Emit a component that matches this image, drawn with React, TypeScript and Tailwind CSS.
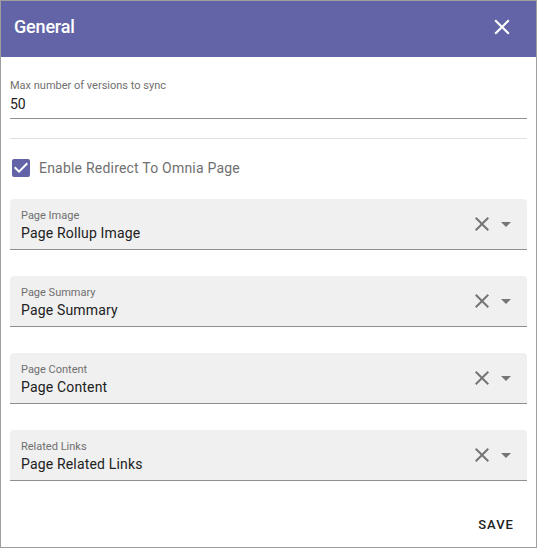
import { useState } from 'react';

const selects = [
  { label: 'Page Image', value: 'Page Rollup Image' },
  { label: 'Page Summary', value: 'Page Summary' },
  { label: 'Page Content', value: 'Page Content' },
  { label: 'Related Links', value: 'Page Related Links' },
];

const closePath =
  'M19,6.41L17.59,5L12,10.59L6.41,5L5,6.41L10.59,12L5,17.59L6.41,19L12,13.41L17.59,19L19,17.59L13.41,12L19,6.41Z';

function SelectField({ label, value }: { label: string; value: string }) {
  return (
    <div className="flex items-center h-[51px] bg-[#f0f0f0] rounded-t-[4px] border-b border-[#8f8f8f] pl-[11px] pr-[9px]">
      <div className="flex-1 self-start pt-[10px] flex flex-col">
        <span className="text-[11px] leading-[14px] text-[#6f6f6f]">{label}</span>
        <span className="text-[14px] leading-[20px] tracking-[0.012em] text-[#212121]">{value}</span>
      </div>
      <svg viewBox="0 0 24 24" className="w-6 h-6 fill-[#757575]">
        <path d={closePath} />
      </svg>
      <svg viewBox="0 0 24 24" className="w-6 h-6 fill-[#757575]">
        <path d="M7,10L12,15L17,10H7Z" />
      </svg>
    </div>
  );
}

export default function App() {
  const [checked, setChecked] = useState(true);

  return (
    <div
      className="w-[537px] h-[548px] border border-[#9e9e9e] bg-white flex flex-col"
      style={{ fontFamily: 'Roboto, "Noto Sans", sans-serif' }}
    >
      {/* Header */}
      <div className="h-[56px] bg-[#6264a7] flex items-center justify-between pl-[13px] pr-[21px] pb-[5px]">
        <span className="text-white text-[18px] font-medium tracking-[-0.01em]">General</span>
        <svg viewBox="0 0 24 24" className="w-[26px] h-[26px] fill-white">
          <path d={closePath} />
        </svg>
      </div>

      <div className="flex-1 flex flex-col px-[9px] pt-[22px]">
        {/* Text field */}
        <div className="flex flex-col border-b border-[#8f8f8f] pb-[4px]">
          <span className="text-[11px] leading-[14px] text-[#6f6f6f]">Max number of versions to sync</span>
          <span className="mt-[1px] text-[14px] leading-[20px] text-[#212121]">50</span>
        </div>

        <div className="mt-[19px] h-px bg-[#e0e0e0]" />

        {/* Checkbox */}
        <label className="mt-[18px] flex items-center h-[22px] cursor-pointer" onClick={() => setChecked(!checked)}>
          <svg viewBox="0 0 24 24" className="w-6 h-6 -ml-[1px] fill-[#6264a7]">
            {checked ? (
              <path d="M10,17L5,12L6.41,10.58L10,14.17L17.59,6.58L19,8M19,3H5C3.89,3 3,3.89 3,5V19A2,2 0 0,0 5,21H19A2,2 0 0,0 21,19V5C21,3.89 20.1,3 19,3Z" />
            ) : (
              <path d="M19,3H5C3.89,3 3,3.89 3,5V19A2,2 0 0,0 5,21H19A2,2 0 0,0 21,19V5C21,3.89 20.1,3 19,3M19,5V19H5V5H19Z" />
            )}
          </svg>
          <span className="ml-[6px] text-[14px] tracking-[0.015em] text-[#707070]">Enable Redirect To Omnia Page</span>
        </label>

        {/* Selects */}
        <div className="mt-[20px] flex flex-col gap-[26px]">
          {selects.map((s) => (
            <SelectField key={s.label} label={s.label} value={s.value} />
          ))}
        </div>

        <div className="flex-1" />

        {/* Footer */}
        <div className="flex justify-end pb-[13px] pr-[13px]">
          <button className="text-[13px] font-medium tracking-[0.08em] text-[#212121]">SAVE</button>
        </div>
      </div>
    </div>
  );
}
